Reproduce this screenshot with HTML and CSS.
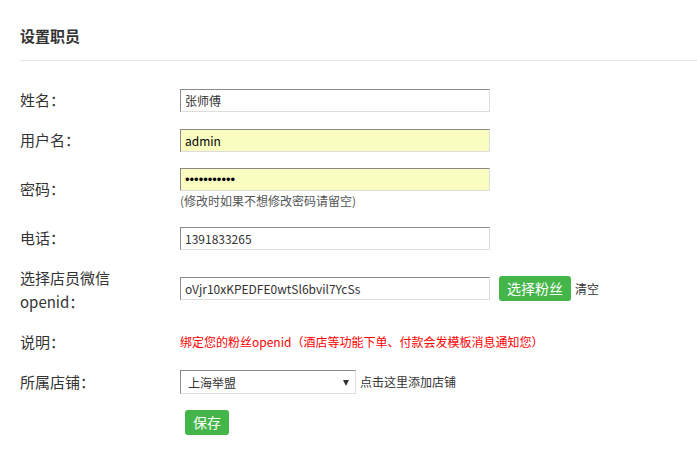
FILE: index.html
```html
<!DOCTYPE html>
<html lang="zh-CN">
<head>
  <meta charset="UTF-8">
  <title>设置职员</title>
  <link rel="stylesheet" href="styles.css">
</head>
<body>

<div class="panel">
  <h2 class="panel-title">设置职员</h2>

  <form class="staff-form">
    <div class="row">
      <label class="row-label">姓名：</label>
      <div class="row-field">
        <input type="text" class="txt" value="张师傅">
      </div>
    </div>

    <div class="row">
      <label class="row-label">用户名：</label>
      <div class="row-field">
        <input type="text" class="txt autofill" value="admin">
      </div>
    </div>

    <div class="row">
      <label class="row-label">密码：</label>
      <div class="row-field">
        <input type="password" class="txt autofill pwd" value="12345678901">
        <div class="hint">(修改时如果不想修改密码请留空)</div>
      </div>
    </div>

    <div class="row">
      <label class="row-label">电话：</label>
      <div class="row-field">
        <input type="text" class="txt" value="1391833265">
      </div>
    </div>

    <div class="row row-openid">
      <label class="row-label">选择店员微信<br>openid：</label>
      <div class="row-field inline">
        <input type="text" class="txt" value="oVjr10xKPEDFE0wtSl6bvil7YcSs">
        <button type="button" class="btn btn-pick">选择粉丝</button>
        <a class="link">清空</a>
      </div>
    </div>

    <div class="row">
      <label class="row-label">说明：</label>
      <div class="row-field">
        <span class="note">绑定您的粉丝openid（酒店等功能下单、付款会发模板消息通知您）</span>
      </div>
    </div>

    <div class="row">
      <label class="row-label">所属店铺：</label>
      <div class="row-field inline">
        <span class="select-wrap">
          <select class="sel">
            <option>上海举盟</option>
          </select>
        </span>
        <a class="link">点击这里添加店铺</a>
      </div>
    </div>

    <div class="row">
      <span class="row-label"></span>
      <div class="row-field">
        <button type="submit" class="btn btn-save">保存</button>
      </div>
    </div>
  </form>
</div>

</body>
</html>
```

FILE: styles.css
```css
/* General Styles */
* {
  margin: 0;
  padding: 0;
  box-sizing: border-box;
}

body {
  font-family: "Noto Sans CJK SC", "Open Sans", sans-serif;
  background-color: #fff;
  color: #333;
}

.panel {
  padding: 26px 0 0 20px;
}

.panel-title {
  font-size: 15px;
  font-weight: bold;
  line-height: 20px;
  color: #333;
  padding-bottom: 14px;
  border-bottom: 1px solid #e8e8e8;
}

.staff-form {
  padding-top: 27px;
}

.row {
  display: flex;
  align-items: center;
  margin-bottom: 16px;
}

.row-openid .row-field {
  margin-top: -3px;
}

.row-label {
  width: 160px;
  flex-shrink: 0;
  font-size: 15px;
  line-height: 24px;
  color: #333;
}

.row-field {
  line-height: 0;
}

.row-field.inline {
  display: flex;
  align-items: center;
}

.txt {
  display: block;
  width: 310px;
  height: 23px;
  padding: 0 4px;
  font-family: inherit;
  font-size: 12px;
  line-height: 21px;
  color: #333;
  background-color: #fff;
  border: 1px solid #ddd;
  border-top-color: #8a8a8a;
  border-left-color: #8a8a8a;
  outline: none;
}

.txt.autofill {
  background-color: #fafdc0;
  color: #000;
}

.txt.pwd {
  font-family: "Liberation Sans", sans-serif;
  font-size: 13px;
}

.hint {
  font-size: 12px;
  line-height: 19px;
  color: #555;
}

.btn {
  display: block;
  border: none;
  border-radius: 3px;
  background-color: #44b549;
  color: #fff;
  font-family: inherit;
  line-height: 25px;
  cursor: pointer;
}

.btn-pick {
  width: 72px;
  height: 25px;
  margin-left: 9px;
  font-size: 14px;
}

.btn-save {
  width: 44px;
  height: 25px;
  margin-left: 5px;
  font-size: 14px;
}

.link {
  margin-left: 4px;
  font-size: 12px;
  line-height: 20px;
  color: #333;
}

.note {
  font-size: 12px;
  line-height: 24px;
  color: #f00;
}

.select-wrap {
  position: relative;
  display: block;
}

.select-wrap::after {
  content: "";
  position: absolute;
  right: 7px;
  top: 10px;
  border-left: 3px solid transparent;
  border-right: 3px solid transparent;
  border-top: 6px solid #333;
  pointer-events: none;
}

.sel {
  -webkit-appearance: none;
  appearance: none;
  display: block;
  width: 176px;
  height: 24px;
  padding: 0 7px;
  font-family: inherit;
  font-size: 12px;
  color: #333;
  background-color: #fff;
  border: 1px solid #ddd;
  border-top-color: #8a8a8a;
  border-left-color: #8a8a8a;
  border-radius: 0;
  outline: none;
}
```
